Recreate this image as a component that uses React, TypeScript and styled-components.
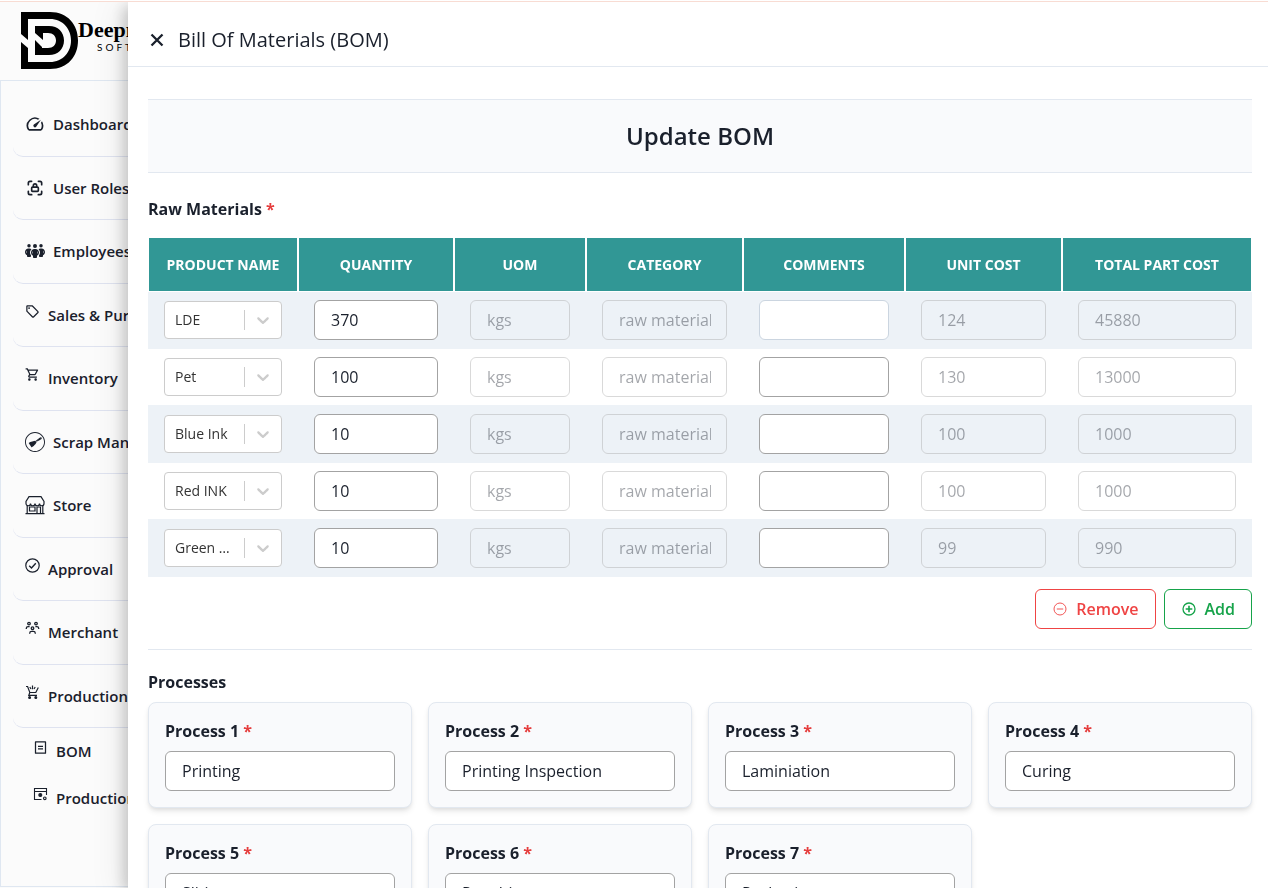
import React from "react";
import styled, { createGlobalStyle, css } from "styled-components";
import { MdOutlineSpeed, MdOutlineSell, MdOutlineShoppingCart } from "react-icons/md";
import { TbLockAccess } from "react-icons/tb";
import { SiScrapy } from "react-icons/si";
import { RiBillLine } from "react-icons/ri";
import { FaPeopleGroup } from "react-icons/fa6";

const GlobalStyle = createGlobalStyle`
  *, *::before, *::after { box-sizing: border-box; }
  body {
    margin: 0;
    overflow: hidden;
    background: #fbfbfb;
    color: #1a202c;
    font-family: "Open Sans", "Noto Sans", sans-serif;
    font-size: 16px;
    line-height: 24px;
  }
  button, input, select { font: inherit; color: inherit; }
  h1, h2, h3, ul { margin: 0; padding: 0; font-size: inherit; font-weight: inherit; }
`;

const Page = styled.div`
  display: flex;
  flex-direction: column;
  height: 100vh;
  padding-bottom: 1px;
`;

const TopLine = styled.div`
  position: relative;
  z-index: 1;
  flex: none;
  height: 2px;
  background: #fff;
  border-bottom: 1px solid #f8dcd3;
`;

const Brand = styled.header`
  flex: none;
  display: flex;
  height: 78px;
  padding: 9px 20px;
`;

const BrandName = styled.div`
  display: flex;
  flex-direction: column;
  align-items: flex-start;
  padding-top: 7px;
  color: #000;
  font-family: "Liberation Serif", serif;
  font-size: 22px;
  font-weight: 700;
  line-height: 24px;
`;

const BrandTag = styled.span`
  padding-left: 19px;
  font-family: Lato, sans-serif;
  font-size: 10px;
  font-weight: 400;
  line-height: 10px;
  letter-spacing: 3px;
`;

const Sidebar = styled.nav`
  flex: 1;
  min-height: 0;
  width: 260px;
  padding: 12px;
  border: 1px solid #dfe7f1;
  overflow: hidden;
`;

const NavList = styled.ul`
  list-style: none;
`;

const NavLink = styled.a<{ $small?: boolean; $sub?: boolean }>`
  display: flex;
  align-items: ${(p) => (p.$small ? "flex-start" : "center")};
  gap: 8px;
  padding: ${(p) => (p.$sub ? "12px 20px" : "20px 12px")};
  ${(p) =>
    !p.$sub &&
    css`
      border-bottom: 1px solid #dfe3f0;
      border-radius: 10px;
    `}
  color: #1a202c;
  font-size: 15px;
  font-weight: 600;
  line-height: 1.5;
  text-decoration: none;
  white-space: nowrap;

  svg {
    flex: none;
    width: ${(p) => (p.$small ? 15 : 20)}px;
    height: ${(p) => (p.$small ? 15 : 20)}px;
  }
`;

const Drawer = styled.section`
  position: fixed;
  top: 2px;
  right: 0;
  bottom: 0;
  left: 128px;
  overflow: hidden;
  background: #fff;
  box-shadow: -4px 4px 14px rgba(0, 0, 0, 0.2), -9px 4px 28px 4px rgba(0, 0, 0, 0.05);
`;

const DrawerHeader = styled.header`
  display: flex;
  align-items: center;
  gap: 12px;
  padding: 22px 20px 10px;
  border-bottom: 1px solid #e2e8f0;
`;

const CloseButton = styled.button`
  display: flex;
  padding: 0;
  border: 0;
  background: none;
`;

const DrawerTitle = styled.h1`
  font-size: 20px;
  line-height: 32px;
`;

const DrawerBody = styled.form`
  padding: 32px 16px 32px 20px;
`;

const Banner = styled.h2`
  padding: 20px;
  border: solid #e2e8f0;
  border-width: 1px 0;
  background: #f9fafc;
  font-size: 24px;
  font-weight: 600;
  line-height: 32px;
  text-align: center;
`;

const SectionTitle = styled.h3<{ $gap: number }>`
  margin-bottom: ${(p) => p.$gap}px;
  font-weight: 700;
`;

const Materials = styled.section`
  padding: 24px 0 20px;
  border-bottom: 1px solid #e2e8f0;
`;

const Required = styled.span`
  color: #e53e3e;
`;

const Table = styled.table`
  width: 100%;
  table-layout: fixed;
  border-collapse: separate;
  border-spacing: 0;
`;

const Th = styled.th`
  height: 55px;
  padding: 0;
  border: 1px solid #fff;
  background: #319795;
  color: #fff;
  font-size: 14px;
  font-weight: 700;
  line-height: 20px;
  text-transform: uppercase;
`;

const Row = styled.tr`
  &:nth-child(odd) {
    background: #edf2f7;
  }
`;

const Td = styled.td`
  padding: 8px 16px;
  border-bottom: 1px solid #edf2f7;
`;

const TextInput = styled.input<{ $soft?: boolean }>`
  display: block;
  width: 100%;
  height: 40px;
  padding: 0 15px 0 16px;
  border: 1px solid ${(p) => (p.$soft ? "#cbd5e0" : "#a3a3a3")};
  border-radius: 6px;
  background: #fff;

  &:disabled {
    border-color: #a3a3a3;
    background: transparent;
    color: #1a202c;
    opacity: 0.4;
  }
`;

const SelectBox = styled.div`
  display: flex;
  align-items: center;
  height: 38px;
  border: 1px solid #ccc;
  border-radius: 4px;
  background: #fff;
`;

const Select = styled.select`
  flex: 1;
  min-width: 0;
  height: 36px;
  padding: 0 14px 0 10px;
  border: 0;
  appearance: none;
  background: none;
  color: #333;
  font-size: 14px;
  overflow: hidden;
  text-overflow: ellipsis;
`;

const SelectArrow = styled.span`
  flex: none;
  display: flex;
  padding: 0 8px;
  border-left: 1px solid #ccc;
  color: #ccc;
`;

const Actions = styled.div`
  display: flex;
  justify-content: flex-end;
  gap: 8px;
  margin-top: 12px;
`;

const ActionButton = styled.button<{ $tone: string }>`
  display: flex;
  align-items: center;
  gap: 8px;
  height: 40px;
  padding: 0 16px;
  border: 1px solid ${(p) => p.$tone};
  border-radius: 6px;
  background: #fff;
  color: ${(p) => p.$tone};
  font-weight: 600;
`;

const Processes = styled.section`
  padding-top: 20px;
`;

const CardGrid = styled.div`
  display: grid;
  grid-template-columns: repeat(4, 1fr);
  gap: 16px;
`;

const Card = styled.div`
  padding: 16px;
  border: 1px solid #e2e8f0;
  border-radius: 8px;
  background: #f9fafc;
  box-shadow: 0 4px 6px -1px rgba(0, 0, 0, 0.1), 0 2px 4px -1px rgba(0, 0, 0, 0.06);
`;

const CardLabel = styled.label`
  display: block;
  margin-bottom: 8px;
  font-weight: 700;
`;

const Logo = () => (
  <svg width="58" height="60" viewBox="0 0 58 60" aria-hidden="true">
    <path
      fillRule="evenodd"
      d="M1 1H30C48 1 58 14 58 29.500S48 58 30 58H1V31L8 37V51H30C43 51 51 41 51 29.500S43 8 30 8H8V29L1 23Z"
    />
    <path
      fillRule="evenodd"
      d="M15 15H29C38 15 44 21 44 29.500S38 44 29 44H15V29L22 36V37H28C33 37 36 34 36 29.500S33 22 28 22H23V29L15 22Z"
    />
  </svg>
);

const StoreIcon = () => (
  <svg viewBox="0 0 20 20" fill="none" stroke="currentColor" strokeWidth="1.200" aria-hidden="true">
    <path d="M4 1.600H16L19 6.500V8.500a2.200 2.200 0 0 1-4.500 0a2.250 2.250 0 0 1-4.500 0a2.250 2.250 0 0 1-4.500 0a2.200 2.200 0 0 1-4.500 0V6.500Z" />
    <path d="M2.200 10.500V18.400M17.800 10.500V18.400M.5 18.600H19.500M4.500 12H10V16H4.500ZM12 18.400V12H15.500V18.400" />
  </svg>
);

const ApprovalIcon = () => (
  <svg viewBox="0 0 15 15" fill="none" stroke="currentColor" strokeWidth="1.200" aria-hidden="true">
    <circle cx="7.500" cy="7.500" r="6.700" />
    <path d="M4.200 7.800L6.500 10L10.800 5.200" strokeWidth="1.400" />
  </svg>
);

const MerchantIcon = () => (
  <svg viewBox="0 0 15 15" fill="none" stroke="currentColor" strokeWidth="1.300" aria-hidden="true">
    <circle cx="4" cy="2.600" r="1.300" />
    <circle cx="11" cy="2.600" r="1.300" />
    <circle cx="7.500" cy="7.200" r="1.300" />
    <path d="M1.300 8V7.400A1.800 1.800 0 0 1 3.100 5.700H4.600M13.700 8V7.400A1.800 1.800 0 0 0 11.900 5.700H10.400M4.700 12.800V12.200A1.900 1.900 0 0 1 6.600 10.400H8.400A1.900 1.900 0 0 1 10.300 12.200V12.800" />
  </svg>
);

const ProductionIcon = () => (
  <svg viewBox="0 0 15 15" fill="none" stroke="currentColor" strokeWidth="1.200" aria-hidden="true">
    <path d="M1 1.500H2.600L4.800 7.500H10.800L13.300 2.500M4.800 7.500L3.800 10.300H12M7.500 .5V4.200M4.800 2L6 4M10.200 2L9 4" />
    <circle cx="4.600" cy="12.600" r=".9" fill="currentColor" />
    <circle cx="10.800" cy="12.600" r=".9" fill="currentColor" />
  </svg>
);

const StatusIcon = () => (
  <svg viewBox="0 0 15 15" fill="none" stroke="currentColor" strokeWidth="1.100" aria-hidden="true">
    <path d="M8.500 12.500H1.500V1.500H13.500V8M1.500 4.500H13.500" />
    <circle cx="7.300" cy="8" r="1.500" fill="currentColor" />
    <circle cx="11.800" cy="11.300" r="1.300" />
  </svg>
);

const CircleSign = ({ plus }: { plus?: boolean }) => (
  <svg width="16" height="16" viewBox="0 0 16 16" fill="none" stroke="currentColor" strokeWidth={plus ? 1.3 : 0.9} aria-hidden="true">
    <circle cx="8" cy="8" r="6" />
    <path d={plus ? "M8 4.700V11.300M4.700 8H11.300" : "M4.800 8H11.200"} strokeWidth={plus ? 1.6 : 0.9} />
  </svg>
);

type NavEntry = { label: string; icon: React.ReactNode; small?: boolean; sub?: boolean };

const nav: NavEntry[] = [
  { label: "Dashboard", icon: <MdOutlineSpeed /> },
  { label: "User Roles", icon: <TbLockAccess /> },
  { label: "Employees", icon: <FaPeopleGroup /> },
  { label: "Sales & Purchase", icon: <MdOutlineSell />, small: true },
  { label: "Inventory", icon: <MdOutlineShoppingCart />, small: true },
  { label: "Scrap Management", icon: <SiScrapy /> },
  { label: "Store", icon: <StoreIcon /> },
  { label: "Approval", icon: <ApprovalIcon />, small: true },
  { label: "Merchant", icon: <MerchantIcon />, small: true },
  { label: "Production", icon: <ProductionIcon />, small: true },
  { label: "BOM", icon: <RiBillLine />, small: true, sub: true },
  { label: "Production Status", icon: <StatusIcon />, small: true, sub: true },
];

const columns = [
  { title: "Product Name", width: 150 },
  { title: "Quantity", width: 156 },
  { title: "UOM", width: 132 },
  { title: "Category", width: 157 },
  { title: "Comments", width: 162 },
  { title: "Unit Cost", width: 157 },
  { title: "Total Part Cost", width: 190 },
];

const materials = [
  { name: "LDE", quantity: 370, unit: 124, total: 45880 },
  { name: "Pet", quantity: 100, unit: 130, total: 13000 },
  { name: "Blue Ink", quantity: 10, unit: 100, total: 1000 },
  { name: "Red INK", quantity: 10, unit: 100, total: 1000 },
  { name: "Green INK", quantity: 10, unit: 99, total: 990 },
];

const processes = [
  "Printing",
  "Printing Inspection",
  "Laminiation",
  "Curing",
  "Sliting",
  "Pouching",
  "Packaging",
];

export default function App() {
  return (
    <>
      <GlobalStyle />
      <Page>
        <TopLine />
        <Brand>
          <Logo />
          <BrandName>
            Deepnap
            <BrandTag>SOFTECH</BrandTag>
          </BrandName>
        </Brand>
        <Sidebar>
          <NavList>
            {nav.map((item) => (
              <li key={item.label}>
                <NavLink href="#" $small={item.small} $sub={item.sub}>
                  {item.icon}
                  {item.label}
                </NavLink>
              </li>
            ))}
          </NavList>
        </Sidebar>
      </Page>
      <Drawer>
        <DrawerHeader>
          <CloseButton type="button" aria-label="Close">
            <svg width="18" height="18" viewBox="0 0 18 18" stroke="currentColor" strokeWidth="2.300" aria-hidden="true">
              <path d="M3.500 3.500L14.500 14.500M14.500 3.500L3.500 14.500" />
            </svg>
          </CloseButton>
          <DrawerTitle>Bill Of Materials (BOM)</DrawerTitle>
        </DrawerHeader>
        <DrawerBody>
          <Banner>Update BOM</Banner>
          <Materials>
            <SectionTitle $gap={16}>
              Raw Materials <Required>*</Required>
            </SectionTitle>
            <Table>
              <colgroup>
                {columns.map((c) => (
                  <col key={c.title} width={c.width} />
                ))}
              </colgroup>
              <thead>
                <tr>
                  {columns.map((c) => (
                    <Th key={c.title} scope="col">
                      {c.title}
                    </Th>
                  ))}
                </tr>
              </thead>
              <tbody>
                {materials.map((m, i) => (
                  <Row key={m.name}>
                    <Td>
                      <SelectBox>
                        <Select aria-label="Product name" defaultValue={m.name}>
                          {materials.map((o) => (
                            <option key={o.name}>{o.name}</option>
                          ))}
                        </Select>
                        <SelectArrow>
                          <svg width="20" height="20" viewBox="0 0 20 20" fill="currentColor" aria-hidden="true">
                            <path d="M4.516 7.548c0.436-0.446 1.043-0.481 1.576 0l3.908 3.747 3.908-3.747c0.533-0.481 1.141-0.446 1.574 0 0.436 0.445 0.408 1.197 0 1.615-0.406 0.418-4.695 4.502-4.695 4.502-0.217 0.223-0.502 0.335-0.787 0.335s-0.570-0.112-0.789-0.335c0 0-4.287-4.084-4.695-4.502s-0.436-1.170 0-1.615z" />
                          </svg>
                        </SelectArrow>
                      </SelectBox>
                    </Td>
                    <Td>
                      <TextInput aria-label="Quantity" defaultValue={m.quantity} />
                    </Td>
                    <Td>
                      <TextInput aria-label="UOM" defaultValue="kgs" disabled />
                    </Td>
                    <Td>
                      <TextInput aria-label="Category" defaultValue="raw material" disabled />
                    </Td>
                    <Td>
                      <TextInput aria-label="Comments" $soft={i === 0} />
                    </Td>
                    <Td>
                      <TextInput aria-label="Unit cost" defaultValue={m.unit} disabled />
                    </Td>
                    <Td>
                      <TextInput aria-label="Total part cost" defaultValue={m.total} disabled />
                    </Td>
                  </Row>
                ))}
              </tbody>
            </Table>
            <Actions>
              <ActionButton type="button" $tone="#ef4444">
                <CircleSign />
                Remove
              </ActionButton>
              <ActionButton type="button" $tone="#16a34a">
                <CircleSign plus />
                Add
              </ActionButton>
            </Actions>
          </Materials>
          <Processes>
            <SectionTitle $gap={8}>Processes</SectionTitle>
            <CardGrid>
              {processes.map((name, i) => (
                <Card key={name}>
                  <CardLabel htmlFor={`process-${i + 1}`}>
                    Process {i + 1} <Required>*</Required>
                  </CardLabel>
                  <TextInput id={`process-${i + 1}`} defaultValue={name} />
                </Card>
              ))}
            </CardGrid>
          </Processes>
        </DrawerBody>
      </Drawer>
    </>
  );
}
